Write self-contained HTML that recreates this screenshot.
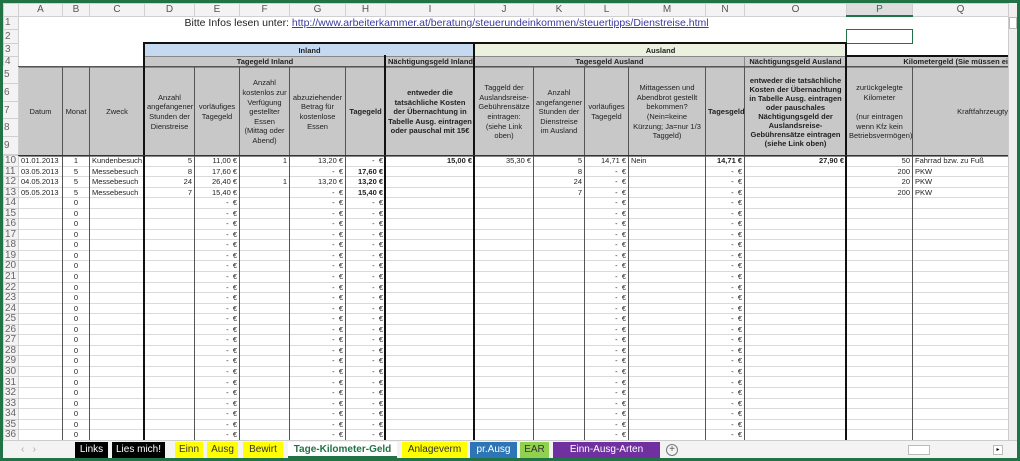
<!DOCTYPE html>
<html><head><meta charset="utf-8"><style>
*{box-sizing:border-box;margin:0;padding:0}
body{width:1020px;height:461px;overflow:hidden;background:#217346;font-family:"Liberation Sans",sans-serif;position:relative}
#wrap{position:absolute;left:3px;top:3px;width:1014px;height:455px;background:#fff;overflow:hidden}
table{position:absolute;left:0;border-collapse:collapse;table-layout:fixed;width:1005px}
td{border:1px solid #dadada;font-size:7.5px;color:#222;white-space:nowrap;overflow:hidden;padding:0 2px;line-height:9px}
tr.ch td{background:#f3f3f3;color:#555;font-size:10px;text-align:center;height:12px;border-color:#d0d0d0;line-height:11px}
td.rn{background:#f3f3f3;color:#666;font-size:10px;text-align:left;padding-left:1px;border-color:#d0d0d0;line-height:10px}
tr.b td{height:10.55px;line-height:9.5px}
.g{background:#c8c8c8;border-color:#888;text-align:center;line-height:10px}
.w{white-space:normal;line-height:9.6px}
.bo{font-weight:bold}
.r{text-align:right}
.c{text-align:center}
.vl{position:absolute;width:1px;background:#555}
.tv{position:absolute;width:2px;background:#111}
.hl{position:absolute;height:2px;background:#111}
.rnx{position:absolute;left:0;width:15px;background:#f3f3f3;color:#666;font-size:10px;padding-left:1px;border-bottom:1px solid #d0d0d0;line-height:17px;height:17.8px}
#tabs{position:absolute;left:0;top:437px;width:1014px;height:18px;background:#f3f3f3;border-top:1px solid #ccc}
.t{position:absolute;top:1px;height:16px;font-size:10px;line-height:16px;text-align:center}
</style></head><body><div id="wrap">
<table style="top:0">
<colgroup><col style="width:15px"><col style="width:44px"><col style="width:27px"><col style="width:55px"><col style="width:50px"><col style="width:45px"><col style="width:50px"><col style="width:56px"><col style="width:40px"><col style="width:89px"><col style="width:59px"><col style="width:51px"><col style="width:44px"><col style="width:77px"><col style="width:39px"><col style="width:102px"><col style="width:66px"><col style="width:96px"></colgroup>
<tr class="ch"><td></td><td>A</td><td>B</td><td>C</td><td>D</td><td>E</td><td>F</td><td>G</td><td>H</td><td>I</td><td>J</td><td>K</td><td>L</td><td>M</td><td>N</td><td>O</td><td style="background:#ddd;color:#217346;border-bottom:2px solid #217346">P</td><td>Q</td></tr>
<tr style="height:13px"><td class="rn">1</td><td colspan="3" rowspan="4" style="border:none"></td><td colspan="13" style="border:none;font-size:10.5px;padding-left:40px;line-height:12px">Bitte Infos lesen unter: <span style="color:#3a3aa0;text-decoration:underline">http://www.arbeiterkammer.at/beratung/steuerundeinkommen/steuertipps/Dienstreise.html</span></td></tr>
<tr style="height:14px"><td class="rn">2</td><td colspan="12" style="border:none"></td><td style="border:1.5px solid #217346"></td><td style="border:none"></td></tr>
<tr style="height:13px"><td class="rn">3</td><td colspan="6" class="bo c" style="background:#c5d9f1;border-color:#888">Inland</td><td colspan="6" class="bo c" style="background:#ebf1de;border-color:#888">Ausland</td><td colspan="2" style="border:none"></td></tr>
<tr style="height:11px"><td class="rn">4</td><td colspan="5" class="g bo">Tagegeld Inland</td><td class="g bo">Nächtigungsgeld Inland</td><td colspan="5" class="g bo">Tagesgeld Ausland</td><td class="g bo">Nächtigungsgeld Ausland</td><td colspan="2" class="g bo" style="text-align:right;padding-right:0">Kilometergeld (Sie müssen ei</td></tr>
<tr style="height:89px"><td class="rn"></td><td class="g">Datum</td><td class="g">Monat</td><td class="g">Zweck</td><td class="g w">Anzahl angefangener Stunden der Dienstreise</td><td class="g w">vorläufiges Tagegeld</td><td class="g w">Anzahl kostenlos zur Verfügung gestellter Essen (Mittag oder Abend)</td><td class="g w">abzuziehender Betrag für kostenlose Essen</td><td class="g bo">Tagegeld</td><td class="g bo w">entweder die tatsächliche Kosten der Übernachtung in Tabelle Ausg. eintragen oder pauschal mit 15€</td><td class="g w">Taggeld der Auslandsreise-Gebührensätze eintragen: (siehe Link oben)</td><td class="g w">Anzahl angefangener Stunden der Dienstreise im Ausland</td><td class="g w">vorläufiges Tagegeld</td><td class="g w">Mittagessen und Abendbrot gestellt bekommen? (Nein=keine Kürzung; Ja=nur 1/3 Taggeld)</td><td class="g bo">Tagesgeld</td><td class="g bo w" style="line-height:9px">entweder die tatsächliche Kosten der Übernachtung in Tabelle Ausg. eintragen oder pauschales Nächtigungsgeld der Auslandsreise-Gebührensätze eintragen (siehe Link oben)</td><td class="g w">zurückgelegte Kilometer<br><br>(nur eintragen wenn Kfz kein Betriebsvermögen)</td><td class="g" style="text-align:right;padding-right:0">Kraftfahrzeugty</td></tr>
</table>
<div class="rnx" style="top:63px">5</div>
<div class="rnx" style="top:80.8px">6</div>
<div class="rnx" style="top:98.6px">7</div>
<div class="rnx" style="top:116.4px">8</div>
<div class="rnx" style="top:134.2px">9</div>
<table style="top:152px">
<colgroup><col style="width:15px"><col style="width:44px"><col style="width:27px"><col style="width:55px"><col style="width:50px"><col style="width:45px"><col style="width:50px"><col style="width:56px"><col style="width:40px"><col style="width:89px"><col style="width:59px"><col style="width:51px"><col style="width:44px"><col style="width:77px"><col style="width:39px"><col style="width:102px"><col style="width:66px"><col style="width:96px"></colgroup>
<tr class="b"><td class="rn">10</td><td>01.01.2013</td><td class="c">1</td><td>Kundenbesuch</td><td class="r">5</td><td class="r">11,00 €</td><td class="r">1</td><td class="r">13,20 €</td><td class="r">- &nbsp;€</td><td class="r bo">15,00 €</td><td class="r">35,30 €</td><td class="r">5</td><td class="r">14,71 €</td><td>Nein</td><td class="r bo">14,71 €</td><td class="r bo">27,90 €</td><td class="r">50</td><td>Fahrrad bzw. zu Fuß</td></tr>
<tr class="b"><td class="rn">11</td><td>03.05.2013</td><td class="c">5</td><td>Messebesuch</td><td class="r">8</td><td class="r">17,60 €</td><td></td><td class="r">- &nbsp;€</td><td class="r bo">17,60 €</td><td></td><td></td><td class="r">8</td><td class="r">- &nbsp;€</td><td></td><td class="r">- &nbsp;€</td><td></td><td class="r">200</td><td>PKW</td></tr>
<tr class="b"><td class="rn">12</td><td>04.05.2013</td><td class="c">5</td><td>Messebesuch</td><td class="r">24</td><td class="r">26,40 €</td><td class="r">1</td><td class="r">13,20 €</td><td class="r bo">13,20 €</td><td></td><td></td><td class="r">24</td><td class="r">- &nbsp;€</td><td></td><td class="r">- &nbsp;€</td><td></td><td class="r">20</td><td>PKW</td></tr>
<tr class="b"><td class="rn">13</td><td>05.05.2013</td><td class="c">5</td><td>Messebesuch</td><td class="r">7</td><td class="r">15,40 €</td><td></td><td class="r">- &nbsp;€</td><td class="r bo">15,40 €</td><td></td><td></td><td class="r">7</td><td class="r">- &nbsp;€</td><td></td><td class="r">- &nbsp;€</td><td></td><td class="r">200</td><td>PKW</td></tr>
<tr class="b"><td class="rn">14</td><td></td><td class="c">0</td><td></td><td></td><td class="r">- &nbsp;€</td><td></td><td class="r">- &nbsp;€</td><td class="r">- &nbsp;€</td><td></td><td></td><td></td><td class="r">- &nbsp;€</td><td></td><td class="r">- &nbsp;€</td><td></td><td></td><td></td></tr>
<tr class="b"><td class="rn">15</td><td></td><td class="c">0</td><td></td><td></td><td class="r">- &nbsp;€</td><td></td><td class="r">- &nbsp;€</td><td class="r">- &nbsp;€</td><td></td><td></td><td></td><td class="r">- &nbsp;€</td><td></td><td class="r">- &nbsp;€</td><td></td><td></td><td></td></tr>
<tr class="b"><td class="rn">16</td><td></td><td class="c">0</td><td></td><td></td><td class="r">- &nbsp;€</td><td></td><td class="r">- &nbsp;€</td><td class="r">- &nbsp;€</td><td></td><td></td><td></td><td class="r">- &nbsp;€</td><td></td><td class="r">- &nbsp;€</td><td></td><td></td><td></td></tr>
<tr class="b"><td class="rn">17</td><td></td><td class="c">0</td><td></td><td></td><td class="r">- &nbsp;€</td><td></td><td class="r">- &nbsp;€</td><td class="r">- &nbsp;€</td><td></td><td></td><td></td><td class="r">- &nbsp;€</td><td></td><td class="r">- &nbsp;€</td><td></td><td></td><td></td></tr>
<tr class="b"><td class="rn">18</td><td></td><td class="c">0</td><td></td><td></td><td class="r">- &nbsp;€</td><td></td><td class="r">- &nbsp;€</td><td class="r">- &nbsp;€</td><td></td><td></td><td></td><td class="r">- &nbsp;€</td><td></td><td class="r">- &nbsp;€</td><td></td><td></td><td></td></tr>
<tr class="b"><td class="rn">19</td><td></td><td class="c">0</td><td></td><td></td><td class="r">- &nbsp;€</td><td></td><td class="r">- &nbsp;€</td><td class="r">- &nbsp;€</td><td></td><td></td><td></td><td class="r">- &nbsp;€</td><td></td><td class="r">- &nbsp;€</td><td></td><td></td><td></td></tr>
<tr class="b"><td class="rn">20</td><td></td><td class="c">0</td><td></td><td></td><td class="r">- &nbsp;€</td><td></td><td class="r">- &nbsp;€</td><td class="r">- &nbsp;€</td><td></td><td></td><td></td><td class="r">- &nbsp;€</td><td></td><td class="r">- &nbsp;€</td><td></td><td></td><td></td></tr>
<tr class="b"><td class="rn">21</td><td></td><td class="c">0</td><td></td><td></td><td class="r">- &nbsp;€</td><td></td><td class="r">- &nbsp;€</td><td class="r">- &nbsp;€</td><td></td><td></td><td></td><td class="r">- &nbsp;€</td><td></td><td class="r">- &nbsp;€</td><td></td><td></td><td></td></tr>
<tr class="b"><td class="rn">22</td><td></td><td class="c">0</td><td></td><td></td><td class="r">- &nbsp;€</td><td></td><td class="r">- &nbsp;€</td><td class="r">- &nbsp;€</td><td></td><td></td><td></td><td class="r">- &nbsp;€</td><td></td><td class="r">- &nbsp;€</td><td></td><td></td><td></td></tr>
<tr class="b"><td class="rn">23</td><td></td><td class="c">0</td><td></td><td></td><td class="r">- &nbsp;€</td><td></td><td class="r">- &nbsp;€</td><td class="r">- &nbsp;€</td><td></td><td></td><td></td><td class="r">- &nbsp;€</td><td></td><td class="r">- &nbsp;€</td><td></td><td></td><td></td></tr>
<tr class="b"><td class="rn">24</td><td></td><td class="c">0</td><td></td><td></td><td class="r">- &nbsp;€</td><td></td><td class="r">- &nbsp;€</td><td class="r">- &nbsp;€</td><td></td><td></td><td></td><td class="r">- &nbsp;€</td><td></td><td class="r">- &nbsp;€</td><td></td><td></td><td></td></tr>
<tr class="b"><td class="rn">25</td><td></td><td class="c">0</td><td></td><td></td><td class="r">- &nbsp;€</td><td></td><td class="r">- &nbsp;€</td><td class="r">- &nbsp;€</td><td></td><td></td><td></td><td class="r">- &nbsp;€</td><td></td><td class="r">- &nbsp;€</td><td></td><td></td><td></td></tr>
<tr class="b"><td class="rn">26</td><td></td><td class="c">0</td><td></td><td></td><td class="r">- &nbsp;€</td><td></td><td class="r">- &nbsp;€</td><td class="r">- &nbsp;€</td><td></td><td></td><td></td><td class="r">- &nbsp;€</td><td></td><td class="r">- &nbsp;€</td><td></td><td></td><td></td></tr>
<tr class="b"><td class="rn">27</td><td></td><td class="c">0</td><td></td><td></td><td class="r">- &nbsp;€</td><td></td><td class="r">- &nbsp;€</td><td class="r">- &nbsp;€</td><td></td><td></td><td></td><td class="r">- &nbsp;€</td><td></td><td class="r">- &nbsp;€</td><td></td><td></td><td></td></tr>
<tr class="b"><td class="rn">28</td><td></td><td class="c">0</td><td></td><td></td><td class="r">- &nbsp;€</td><td></td><td class="r">- &nbsp;€</td><td class="r">- &nbsp;€</td><td></td><td></td><td></td><td class="r">- &nbsp;€</td><td></td><td class="r">- &nbsp;€</td><td></td><td></td><td></td></tr>
<tr class="b"><td class="rn">29</td><td></td><td class="c">0</td><td></td><td></td><td class="r">- &nbsp;€</td><td></td><td class="r">- &nbsp;€</td><td class="r">- &nbsp;€</td><td></td><td></td><td></td><td class="r">- &nbsp;€</td><td></td><td class="r">- &nbsp;€</td><td></td><td></td><td></td></tr>
<tr class="b"><td class="rn">30</td><td></td><td class="c">0</td><td></td><td></td><td class="r">- &nbsp;€</td><td></td><td class="r">- &nbsp;€</td><td class="r">- &nbsp;€</td><td></td><td></td><td></td><td class="r">- &nbsp;€</td><td></td><td class="r">- &nbsp;€</td><td></td><td></td><td></td></tr>
<tr class="b"><td class="rn">31</td><td></td><td class="c">0</td><td></td><td></td><td class="r">- &nbsp;€</td><td></td><td class="r">- &nbsp;€</td><td class="r">- &nbsp;€</td><td></td><td></td><td></td><td class="r">- &nbsp;€</td><td></td><td class="r">- &nbsp;€</td><td></td><td></td><td></td></tr>
<tr class="b"><td class="rn">32</td><td></td><td class="c">0</td><td></td><td></td><td class="r">- &nbsp;€</td><td></td><td class="r">- &nbsp;€</td><td class="r">- &nbsp;€</td><td></td><td></td><td></td><td class="r">- &nbsp;€</td><td></td><td class="r">- &nbsp;€</td><td></td><td></td><td></td></tr>
<tr class="b"><td class="rn">33</td><td></td><td class="c">0</td><td></td><td></td><td class="r">- &nbsp;€</td><td></td><td class="r">- &nbsp;€</td><td class="r">- &nbsp;€</td><td></td><td></td><td></td><td class="r">- &nbsp;€</td><td></td><td class="r">- &nbsp;€</td><td></td><td></td><td></td></tr>
<tr class="b"><td class="rn">34</td><td></td><td class="c">0</td><td></td><td></td><td class="r">- &nbsp;€</td><td></td><td class="r">- &nbsp;€</td><td class="r">- &nbsp;€</td><td></td><td></td><td></td><td class="r">- &nbsp;€</td><td></td><td class="r">- &nbsp;€</td><td></td><td></td><td></td></tr>
<tr class="b"><td class="rn">35</td><td></td><td class="c">0</td><td></td><td></td><td class="r">- &nbsp;€</td><td></td><td class="r">- &nbsp;€</td><td class="r">- &nbsp;€</td><td></td><td></td><td></td><td class="r">- &nbsp;€</td><td></td><td class="r">- &nbsp;€</td><td></td><td></td><td></td></tr>
<tr class="b"><td class="rn">36</td><td></td><td class="c">0</td><td></td><td></td><td class="r">- &nbsp;€</td><td></td><td class="r">- &nbsp;€</td><td class="r">- &nbsp;€</td><td></td><td></td><td></td><td class="r">- &nbsp;€</td><td></td><td class="r">- &nbsp;€</td><td></td><td></td><td></td></tr>
</table>
<div class="vl" style="left:59px;top:63px;height:374px"></div>
<div class="vl" style="left:86px;top:63px;height:374px"></div>
<div class="vl" style="left:191px;top:63px;height:374px"></div>
<div class="vl" style="left:236px;top:63px;height:374px"></div>
<div class="vl" style="left:286px;top:63px;height:374px"></div>
<div class="vl" style="left:342px;top:63px;height:374px"></div>
<div class="vl" style="left:530px;top:63px;height:374px"></div>
<div class="vl" style="left:581px;top:63px;height:374px"></div>
<div class="vl" style="left:625px;top:63px;height:374px"></div>
<div class="vl" style="left:702px;top:63px;height:374px"></div>
<div class="vl" style="left:741px;top:63px;height:374px"></div>
<div class="vl" style="left:909px;top:63px;height:374px"></div>
<div class="vl" style="left:15px;top:63px;height:1px;width:990px"></div>
<div class="tv" style="left:140px;top:39px;height:398px"></div>
<div class="tv" style="left:381px;top:52px;height:385px"></div>
<div class="tv" style="left:470px;top:39px;height:398px"></div>
<div class="tv" style="left:842px;top:39px;height:398px"></div>
<div class="hl" style="left:140px;top:39px;width:704px"></div>
<div class="hl" style="left:842px;top:52px;width:163px"></div>
<div class="vl" style="left:15px;top:152px;height:1px;width:990px;background:#333"></div>
<div style="position:absolute;left:1005px;top:0;width:9px;height:437px;background:#f0f0f0;border-left:1px solid #ccc"><div style="margin-top:14px;height:12px;background:#fff;border:1px solid #bbb"></div></div>
<div id="tabs">
<div class="t" style="left:18px;color:#aaa">‹ &nbsp; ›</div>
<div class="t" style="left:72px;width:33px;background:#000;color:#fff">Links</div>
<div class="t" style="left:109px;width:53px;background:#000;color:#fff">Lies mich!</div>
<div class="t" style="left:172px;width:28px;background:#ffff00;color:#333">Einn</div>
<div class="t" style="left:204px;width:31px;background:#ffff00;color:#333">Ausg</div>
<div class="t" style="left:240px;width:40px;background:#ffff00;color:#333">Bewirt</div>
<div class="t" style="left:285px;width:109px;background:#fff;color:#217346;font-weight:bold;border-bottom:2px solid #217346">Tage-Kilometer-Geld</div>
<div class="t" style="left:399px;width:65px;background:#ffff00;color:#333">Anlageverm</div>
<div class="t" style="left:467px;width:47px;background:#2e75b6;color:#fff">pr.Ausg</div>
<div class="t" style="left:517px;width:29px;background:#92d050;color:#333">EAR</div>
<div class="t" style="left:550px;width:107px;background:#7030a0;color:#fff">Einn-Ausg-Arten</div>
<div class="t" style="left:663px;width:12px;height:12px;top:3px;border:1px solid #777;border-radius:50%;line-height:10px;color:#555">+</div>
<div style="position:absolute;left:905px;top:4px;width:22px;height:10px;border:1px solid #bbb;background:#fff"></div>
<div style="position:absolute;left:990px;top:4px;width:10px;height:10px;border:1px solid #bbb;background:#fff;font-size:6px;line-height:8px;text-align:center">▸</div>
</div>
</div></body></html>
